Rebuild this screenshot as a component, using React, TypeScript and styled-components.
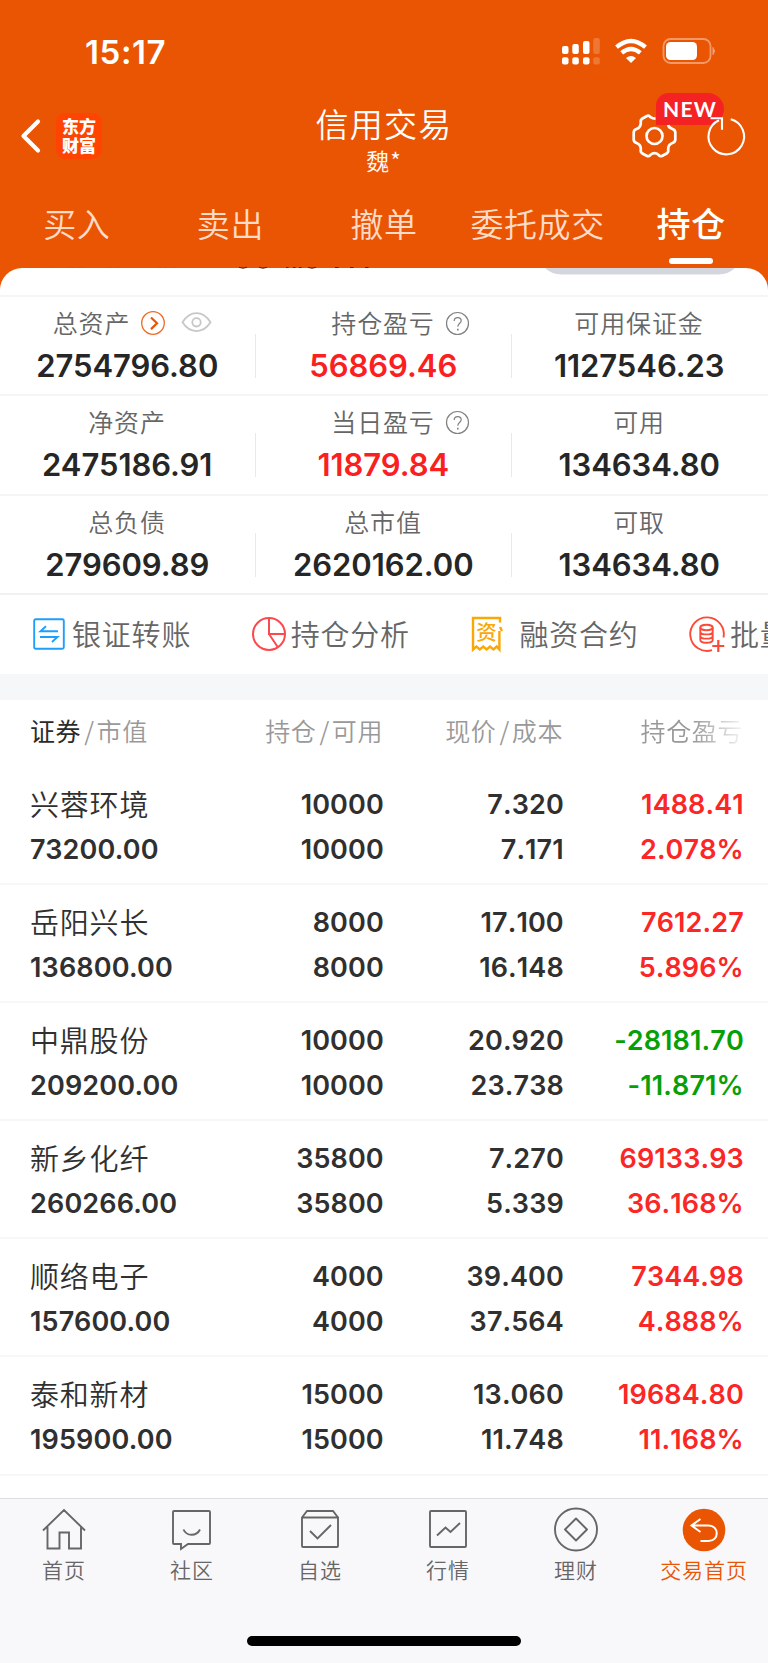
import React from 'react';
import styled, { createGlobalStyle } from 'styled-components';

const Global = createGlobalStyle`
  * { box-sizing: border-box; }
  body { margin: 0; background: #fff; }
`;

const cjk = `'Noto Sans CJK SC', sans-serif`;
const num = `Inter, 'Noto Sans CJK SC', sans-serif`;

const Page = styled.div`
  width: 768px;
  height: 1663px;
  display: flex;
  flex-direction: column;
  overflow: hidden;
  background: #ea5504;
  font-family: ${cjk};
  color: #2b2b2b;
`;

const StatusBar = styled.div`
  height: 102px;
  flex: none;
  display: flex;
  justify-content: space-between;
  padding: 32px 51px 0 85px;
  color: #fff;
`;
const Clock = styled.div`
  font: 600 33px/40px ${num};
  letter-spacing: 0.6px;
`;
const StatusIcons = styled.svg`
  width: 156px;
  height: 40px;
`;

const TitleBar = styled.div`
  height: 86px;
  flex: none;
  display: grid;
  grid-template-columns: 1fr 300px 1fr;
  color: #fff;
`;
const TitleLeft = styled.div`
  display: flex;
  align-items: center;
  gap: 15px;
  padding: 0 0 18px 20px;
`;
const Logo = styled.div`
  width: 46px;
  height: 46px;
  border-radius: 9px;
  background: #ff4300;
  font: 900 17px/19px ${cjk};
  text-align: center;
  padding-top: 3px;
`;
const TitleText = styled.div`
  text-align: center;
  margin-top: -2px;
`;
const Title = styled.div`
  font: 350 33px/46px ${cjk};
  letter-spacing: 1.2px;
`;
const Subtitle = styled.div`
  font: 350 23px/28px ${cjk};
  letter-spacing: 1px;
`;
const TitleRight = styled.div`
  position: relative;
`;
const HeaderIcons = styled.svg`
  position: absolute;
  left: 91px;
  top: 6px;
  overflow: visible;
`;
const NewBadge = styled.div`
  position: absolute;
  left: 122px;
  top: -9px;
  width: 68px;
  height: 32px;
  border-radius: 14px 18px 18px 0;
  background: #f52224;
  font: 700 21px/31px Lato, sans-serif;
  letter-spacing: 1.2px;
  text-align: center;
`;

const Tabs = styled.div`
  height: 80px;
  flex: none;
  display: grid;
  grid-template-columns: repeat(5, 1fr);
`;
const Tab = styled.div<{ $active?: boolean }>`
  position: relative;
  text-align: center;
  padding-top: 11px;
  font: ${p => (p.$active ? '500 34px/48px' : '350 33px/48px')} ${cjk};
  letter-spacing: 0.6px;
  color: ${p => (p.$active ? '#fff' : '#ffdbc8')};
  &::after {
    content: '';
    display: ${p => (p.$active ? 'block' : 'none')};
    width: 44px;
    height: 6px;
    border-radius: 3px;
    background: #fff;
    margin: 11px auto 0;
  }
`;

const Sheet = styled.div`
  flex: 1;
  display: flex;
  flex-direction: column;
  background: #fff;
  border-radius: 22px 22px 0 0;
`;
const ScrolledEdge = styled.div`
  height: 27px;
  flex: none;
  display: flex;
`;
const EdgeSvg = styled.svg`
  margin-top: -2px;
  display: block;
`;

const SummaryRow = styled.div<{ $h: number }>`
  height: ${p => p.$h}px;
  flex: none;
  display: grid;
  grid-template-columns: repeat(3, 256px);
  border-top: 2px solid #f5f5f6;
`;
const SummaryCell = styled.div`
  position: relative;
  text-align: center;
  & + &::before {
    content: '';
    position: absolute;
    left: -1px;
    top: 37px;
    width: 1px;
    height: 44px;
    background: #e9e9ea;
  }
`;
const SummaryLabel = styled.div<{ $shift?: number }>`
  display: flex;
  justify-content: center;
  align-items: center;
  height: 36px;
  margin-top: 7px;
  padding-right: ${p => p.$shift ?? 2}px;
  font: 350 25px/36px ${cjk};
  letter-spacing: 0.85px;
  color: #666;
`;
const LabelIcons = styled.svg`
  position: absolute;
  overflow: visible;
`;
const SummaryValue = styled.div<{ $red?: boolean }>`
  margin-top: 10px;
  padding-right: 1.5px;
  font: 600 31px/32px ${num};
  letter-spacing: -0.05px;
  color: ${p => (p.$red ? '#fb2020' : '#262626')};
`;

const Actions = styled.div`
  height: 81px;
  flex: none;
  display: flex;
  border-top: 2px solid #f1f1f2;
  padding: 0 0 4px 33px;
  overflow: hidden;
`;
const Action = styled.div<{ $gap: number }>`
  width: 218.7px;
  flex: none;
  display: flex;
  align-items: center;
  gap: ${p => p.$gap}px;
  white-space: nowrap;
  font: 350 29px/40px ${cjk};
  letter-spacing: 0.8px;
  color: #666;
  svg { flex: none; overflow: visible; margin-top: 2px; }
`;
const Band = styled.div`
  height: 26px;
  flex: none;
  background: #f6f7f9;
`;

const columns = '30px 160px 193px 180px 180px';
const TableHead = styled.div`
  height: 67px;
  flex: none;
  display: grid;
  grid-template-columns: ${columns};
  font: 350 25px/60px ${cjk};
  letter-spacing: 0.6px;
  color: #999;
  white-space: nowrap;
`;
const HeadCell = styled.div<{ $fade?: boolean }>`
  text-align: right;
  &:nth-child(1) { grid-column: 2; text-align: left; }
  ${p => p.$fade && 'mask-image: linear-gradient(to right, #000 130px, rgba(0,0,0,0.1) 180px);'}
  b { font-weight: 400; color: #2b2b2b; }
  i { font-style: normal; margin: 0 2px 0 3px; }
`;

const Holding = styled.div`
  height: 118.1px;
  flex: none;
  display: grid;
  grid-template-columns: ${columns};
  grid-template-rows: 45.500px 45px;
  padding-top: 14.5px;
  border-bottom: 2px solid #f7f7f8;
  font: 600 27px/45px ${num};
  letter-spacing: 0.15px;
  color: #303030;
`;
const StockName = styled.div`
  grid-column: 2;
  font: 350 29px/43px ${cjk};
  letter-spacing: 0.8px;
  white-space: nowrap;
`;
const MarketValue = styled.div`
  grid-column: 2;
`;
const Figure = styled.div<{ $tone?: string }>`
  text-align: right;
  font-kerning: none;
  letter-spacing: 0.1px;
  margin-right: -0.8px;
  color: ${p => p.$tone || 'inherit'};
`;

const BottomNav = styled.div`
  height: 165px;
  flex: none;
  margin-top: auto;
  display: flex;
  flex-direction: column;
  align-items: center;
  background: #f8f8fb;
  border-top: 1px solid #dedee1;
`;
const NavItems = styled.div`
  width: 768px;
  height: 137px;
  display: grid;
  grid-template-columns: repeat(6, 1fr);
`;
const NavItem = styled.div<{ $active?: boolean }>`
  display: flex;
  flex-direction: column;
  align-items: center;
  padding-top: 9px;
  font: 350 21px/30px ${cjk};
  letter-spacing: 0.9px;
  color: ${p => (p.$active ? '#ea5504' : '#666')};
  span { margin-top: 2px; }
`;
const HomeIndicator = styled.div`
  width: 274px;
  height: 10px;
  border-radius: 5px;
  background: #000;
`;

const Help = () => (
  <LabelIcons style={{ left: 190, top: 15 }} width="24" height="24" fill="none" stroke="#808080" strokeWidth="1.2">
    <circle cx="11.5" cy="11.5" r="11" />
    <path d="M8.2 9c0-2.1 1.500-3.400 3.500-3.400s3.500 1.300 3.500 3.100c0 2.400-3.400 2.800-3.400 6" />
    <path d="M11.8 16.700v1.700" strokeWidth="1.6" />
  </LabelIcons>
);

const TransferIcon = () => (
  <svg width="32" height="32" fill="none" stroke="#1e9ffb" strokeWidth="1.9">
    <rect x="1.2" y="1.2" width="29.6" height="29.6" rx="1.5" />
    <path d="M25 13.3H7.5l5.5-5M7 19h17.5l-5.5 5" />
  </svg>
);
const PieIcon = () => (
  <svg width="34" height="34" fill="none" stroke="#fb4a4e" strokeWidth="2">
    <circle cx="17" cy="17" r="16" />
    <path d="M17 1v16h16M17 17l8.7 13" />
  </svg>
);
const ContractIcon = () => (
  <svg width="32" height="38" fill="none" stroke="#fba705" strokeWidth="2.4">
    <path d="M30 7.500V3H3v31.500l3.400-3 3.400 3 3.400-3 3.400 3 3.400-3 3.400 3 3.400-3 2.600 3V16M30 12l2 4" />
    <text x="16.600" y="25" textAnchor="middle" fontSize="20.500" fontWeight="500" letterSpacing="0" fontFamily="Noto Sans CJK SC" fill="#fba705" stroke="none">资</text>
  </svg>
);
const BatchIcon = () => (
  <svg width="36" height="38" fill="none" stroke="#fb4b38" strokeWidth="1.9">
    <path d="M23 35.2A16.8 16.8 0 1 1 34.500 22.500" />
    <ellipse cx="17.500" cy="12.500" rx="6.200" ry="2.800" />
    <path d="M11.300 12.500v12.500c0 3.600 12.400 3.600 12.400 0V12.500M11.300 16.700c0 3.600 12.400 3.600 12.400 0M11.300 20.900c0 3.600 12.400 3.600 12.400 0" />
    <path d="M29.300 25v12M23.300 31h12" strokeWidth="2.200" />
  </svg>
);

const actions = [
  { label: '银证转账', gap: 7, icon: <TransferIcon /> },
  { label: '持仓分析', gap: 5, icon: <PieIcon /> },
  { label: '融资合约', gap: 17, icon: <ContractIcon /> },
  { label: '批量交易', gap: 5, icon: <BatchIcon /> },
];

const RED = '#fb2626';
const GREEN = '#06a006';
const holdings = [
  ['兴蓉环境', '10000', '7.320', '1488.41', '73200.00', '10000', '7.171', '2.078%'],
  ['岳阳兴长', '8000', '17.100', '7612.27', '136800.00', '8000', '16.148', '5.896%'],
  ['中鼎股份', '10000', '20.920', '-28181.70', '209200.00', '10000', '23.738', '-11.871%'],
  ['新乡化纤', '35800', '7.270', '69133.93', '260266.00', '35800', '5.339', '36.168%'],
  ['顺络电子', '4000', '39.400', '7344.98', '157600.00', '4000', '37.564', '4.888%'],
  ['泰和新材', '15000', '13.060', '19684.80', '195900.00', '15000', '11.748', '11.168%'],
];

const navItems = [
  { label: '首页', icon: <path d="M1 22.500 22 2l21 20.500M5.500 19v21.500h12v-16h9.500v16h12V19" /> },
  { label: '社区', icon: <path d="M4 3h35q1 0 1 1v31q0 1-1 1H18l-7 5v-5H4q-1 0-1-1V4q0-1 1-1zM13.500 21.500c3 7 13 7 16.500 0" /> },
  { label: '自选', icon: <path d="M4 9.500h36v28.500q0 1-1 1H5q-1 0-1-1V9.500L9 3h26l5 6.500M12 23l7.500 7.500L33 17" /> },
  { label: '行情', icon: <path d="M5 3h34q1 0 1 1v34q0 1-1 1H5q-1 0-1-1V4q0-1 1-1zM11 27.500l8.500-8 5 4.500 9.500-9" /> },
  { label: '理财', icon: <><circle cx="22" cy="21.500" r="21" /><path d="M22 10.500 33 21.500 22 32.500 11 21.500z" strokeLinejoin="round" /></> },
];

export default function App() {
  return (
    <Page>
      <Global />
      <StatusBar>
        <Clock>15:17</Clock>
        <StatusIcons fill="#fff">
          <rect x="1" y="14" width="6.500" height="8" rx="2" />
          <rect x="11.300" y="12" width="6.500" height="10" rx="2" />
          <rect x="22" y="9" width="6.500" height="13" rx="2" />
          <rect x="32.300" y="6" width="6.500" height="16" rx="2" opacity=".2" />
          <rect x="1" y="25.300" width="6.500" height="7.300" rx="2" />
          <rect x="11.300" y="25.300" width="6.500" height="7.300" rx="2" />
          <rect x="22" y="25.300" width="6.500" height="7.300" rx="2" />
          <rect x="32.300" y="25.300" width="6.500" height="7.300" rx="2" opacity=".2" />
          <path d="M70 31l-5-5q5-4 10 0z" />
          <g fill="none" stroke="#fff" strokeWidth="4.300">
            <path d="M55.500 15.200q14.500-12.500 29 0" />
            <path d="M60.700 20.900q9.300-8 18.600 0" />
          </g>
          <rect x="102.500" y="7" width="47" height="24" rx="7" fill="none" stroke="#fff" strokeWidth="1.800" opacity=".4" />
          <rect x="105" y="10" width="31" height="18" rx="4.500" />
          <path d="M152 15.500q3 3.500 0 7z" opacity=".45" stroke="#fff" />
        </StatusIcons>
      </StatusBar>

      <TitleBar>
        <TitleLeft>
          <svg width="21" height="36" fill="none" stroke="#fff" strokeWidth="4.200" strokeLinecap="round" strokeLinejoin="round">
            <path d="M18 3.500 3.500 18 18 32.500" />
          </svg>
          <Logo>东方<br />财富</Logo>
        </TitleLeft>
        <TitleText>
          <Title>信用交易</Title>
          <Subtitle>魏*</Subtitle>
        </TitleText>
        <TitleRight>
          <NewBadge>NEW</NewBadge>
          <HeaderIcons width="130" height="54" fill="none" stroke="#fff" strokeWidth="2.700" strokeLinejoin="round">
            <circle cx="29.500" cy="28" r="8" />
            <path d="M30.500 10.700Q27.500 10.600 25.500 9.200Q23.800 7 22 8L17 10.800Q15.300 12 15.800 14.500Q16 19.500 11.500 21Q8.700 22 8.700 24.500V31.500Q8.700 34 11.500 35Q16 36.500 15.800 41.500Q15.300 44 17 45.200L22 48Q24 48.600 25.500 46.800Q29.500 43.500 33.500 46.800Q35 48.600 37 48L42 45.200Q43.700 44 43.200 41.500Q43 36.500 47.500 35Q50.300 34 50.300 31.500V24.500Q50.300 22 47.500 21Q43.500 19.500 43.200 17" />
            <path d="M105.700 11.300A17.800 17.800 0 1 1 94 12.300" strokeWidth="2.100" />
            <path d="M85.500 10.300h11.500v11.500" strokeWidth="2.100" strokeLinejoin="miter" />
          </HeaderIcons>
        </TitleRight>
      </TitleBar>

      <Tabs>
        <Tab>买入</Tab>
        <Tab>卖出</Tab>
        <Tab>撤单</Tab>
        <Tab>委托成交</Tab>
        <Tab $active>持仓</Tab>
      </Tabs>

      <Sheet>
        <ScrolledEdge>
          <EdgeSvg width="768" height="10">
            <path d="M545 2h190q-7 6.500-16 6.500H561q-9 0-16-6.500z" fill="#d3d7dd" />
            <path d="M239 1.300q4 1.500 8 0M259 1.300q4 1.500 8 0M286 1.500h2.500M293 1.500h2.500M299 1.500h2.500M308 1.300q4 1.500 8 0M335 1.500h3.500M350 1.500h3.500M365 1.500h3.500" stroke="#4b2a14" strokeWidth="1.200" fill="none" />
            <path d="M31 1.500h2M50 1.500h2M69 1.500h5M78 1.500h5M108 1.500h4M117 1.500h3M158 1.500h3M164 1.500h3M172 1.500h4" stroke="#a8623a" strokeWidth=".8" />
          </EdgeSvg>
        </ScrolledEdge>

        <SummaryRow $h={99}>
          <SummaryCell>
            <SummaryLabel $shift={73}>总资产</SummaryLabel>
            <LabelIcons style={{ left: 141, top: 14 }} width="72" height="26" fill="none">
              <circle cx="12" cy="12" r="11.300" stroke="#ee6b26" strokeWidth="1.300" />
              <path d="M10 6.500l6 5.800-6 5.800" stroke="#ea5504" strokeWidth="2.200" />
              <path d="M41.500 11.300C49 -1 62 -1 69.500 11.300C62 23 49 23 41.500 11.300z" stroke="#c7c7c7" strokeWidth="1.800" />
              <circle cx="55.500" cy="11.300" r="4.200" stroke="#c7c7c7" strokeWidth="1.800" />
            </LabelIcons>
            <SummaryValue>2754796.80</SummaryValue>
          </SummaryCell>
          <SummaryCell>
            <SummaryLabel>持仓盈亏</SummaryLabel>
            <Help />
            <SummaryValue $red>56869.46</SummaryValue>
          </SummaryCell>
          <SummaryCell>
            <SummaryLabel>可用保证金</SummaryLabel>
            <SummaryValue>1127546.23</SummaryValue>
          </SummaryCell>
        </SummaryRow>
        <SummaryRow $h={100}>
          <SummaryCell>
            <SummaryLabel>净资产</SummaryLabel>
            <SummaryValue>2475186.91</SummaryValue>
          </SummaryCell>
          <SummaryCell>
            <SummaryLabel>当日盈亏</SummaryLabel>
            <Help />
            <SummaryValue $red>11879.84</SummaryValue>
          </SummaryCell>
          <SummaryCell>
            <SummaryLabel>可用</SummaryLabel>
            <SummaryValue>134634.80</SummaryValue>
          </SummaryCell>
        </SummaryRow>
        <SummaryRow $h={99}>
          <SummaryCell>
            <SummaryLabel>总负债</SummaryLabel>
            <SummaryValue>279609.89</SummaryValue>
          </SummaryCell>
          <SummaryCell>
            <SummaryLabel>总市值</SummaryLabel>
            <SummaryValue>2620162.00</SummaryValue>
          </SummaryCell>
          <SummaryCell>
            <SummaryLabel>可取</SummaryLabel>
            <SummaryValue>134634.80</SummaryValue>
          </SummaryCell>
        </SummaryRow>

        <Actions>
          {actions.map(a => (
            <Action key={a.label} $gap={a.gap}>{a.icon}{a.label}</Action>
          ))}
        </Actions>
        <Band />

        <TableHead>
          <HeadCell><b>证券</b><i>/</i>市值</HeadCell>
          <HeadCell>持仓<i>/</i>可用</HeadCell>
          <HeadCell>现价<i>/</i>成本</HeadCell>
          <HeadCell $fade>持仓盈亏</HeadCell>
        </TableHead>
        {holdings.map(h => {
          const tone = h[3].startsWith('-') ? GREEN : RED;
          return (
            <Holding key={h[0]}>
              <StockName>{h[0]}</StockName>
              <Figure>{h[1]}</Figure>
              <Figure>{h[2]}</Figure>
              <Figure $tone={tone}>{h[3]}</Figure>
              <MarketValue>{h[4]}</MarketValue>
              <Figure>{h[5]}</Figure>
              <Figure>{h[6]}</Figure>
              <Figure $tone={tone}>{h[7]}</Figure>
            </Holding>
          );
        })}

        <BottomNav>
          <NavItems>
            {navItems.map(n => (
              <NavItem key={n.label}>
                <svg width="44" height="44" overflow="visible" fill="none" stroke="#666" strokeWidth="1.900">{n.icon}</svg>
                <span>{n.label}</span>
              </NavItem>
            ))}
            <NavItem $active>
              <svg width="44" height="44" fill="none" stroke="#fff" strokeWidth="2">
                <circle cx="22" cy="22" r="21.300" fill="#ea5504" stroke="none" />
                <path d="M18.500 11 9.500 17.500l9 6.500M10 17.500h16.500c11 0 11 15.500 0 15.500h-8" />
              </svg>
              <span>交易首页</span>
            </NavItem>
          </NavItems>
          <HomeIndicator />
        </BottomNav>
      </Sheet>
    </Page>
  );
}
